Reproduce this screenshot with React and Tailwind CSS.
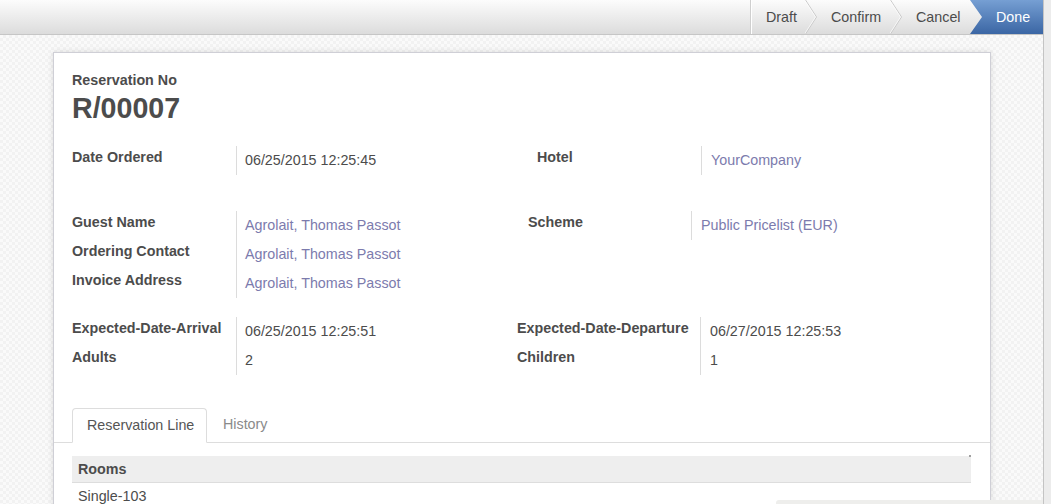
/**
 * Reservation form: status bar on top, sheet with fields, notebook tabs and rooms table.
 */

const linkCls = 'text-[#7c7bad]';

function Chevron() {
  return (
    <svg width="12" height="34" viewBox="0 0 12 34" className="shrink-0">
      <polyline points="0.5,0 11.5,17 0.5,34" fill="none" stroke="#c9c9c9" strokeWidth="1" />
      <polyline points="-0.5,0 10.5,17 -0.5,34" fill="none" stroke="#ffffff" strokeWidth="1" opacity="0.7" />
    </svg>
  );
}

function StatusBar() {
  return (
    <div className="flex h-[34px] text-[14.3px] leading-[16px] text-[#4c4c4c]">
      <div className="w-[55px] pl-[15px] flex items-center border-l border-[#cfcfcf] shadow-[inset_1px_0_0_#ffffff]">
        Draft
      </div>
      <Chevron />
      <div className="w-[73px] pl-[14px] flex items-center">Confirm</div>
      <Chevron />
      <div className="w-[68px] pl-[14px] flex items-center">Cancel</div>
      <div className="w-[73px] pl-[26px] flex items-center text-white bg-gradient-to-b from-[#769fd3] to-[#3b66a4] [clip-path:polygon(0_0,100%_0,100%_100%,0_100%,12px_50%)]">
        Done
      </div>
    </div>
  );
}

function Label({ children }) {
  return <div className="h-[29px] pt-[3px] font-bold whitespace-nowrap">{children}</div>;
}

function Value({ children, link }) {
  return (
    <div className={`h-[29px] pt-[6px] whitespace-nowrap ${link ? linkCls : ''}`}>{children}</div>
  );
}

export default function App() {
  return (
    <div className="relative flex w-[1051px] h-[504px] overflow-hidden font-['Liberation_Sans',Arial,sans-serif] text-[14.3px] leading-[16px] text-[#4c4c4c]">
      <div className="w-[1043px] flex flex-col">
        {/* Top bar */}
        <div className="h-[35px] shrink-0 flex justify-end border-b border-[#c6c6c6] bg-gradient-to-b from-[#fcfcfc] to-[#dcdcdc]">
          <StatusBar />
        </div>

        {/* Sheet background */}
        <div className="flex-1 pt-[17px] pl-[53px] bg-[repeating-conic-gradient(#f2f2f2_0%_25%,#fafafa_0%_50%)] bg-[length:6px_6px]">
          <div className="w-[938px] h-[600px] bg-white border border-[#cfcfd6] shadow-[0_0_6px_rgba(0,0,0,0.12)]">
            <div className="pl-[18px] pr-[19px] pt-[19px]">
              <div className="font-bold">Reservation No</div>
              <div className="mt-[4px] text-[28.6px] leading-[32px] font-bold">R/00007</div>

              {/* Date ordered / Hotel */}
              <div className="flex mt-[22px]">
                <div className="w-[164px]">
                  <Label>Date Ordered</Label>
                </div>
                <div className="w-[301px] self-start border-l border-[#dcdcdc] pl-2">
                  <Value>06/25/2015 12:25:45</Value>
                </div>
                <div className="w-[164px]">
                  <Label>Hotel</Label>
                </div>
                <div className="self-start border-l border-[#dcdcdc] pl-[9px]">
                  <Value link>YourCompany</Value>
                </div>
              </div>

              {/* Guest / Scheme */}
              <div className="flex mt-[36px]">
                <div className="w-[164px]">
                  <Label>Guest Name</Label>
                  <Label>Ordering Contact</Label>
                  <Label>Invoice Address</Label>
                </div>
                <div className="w-[292px] self-start border-l border-[#dcdcdc] pl-2">
                  <Value link>Agrolait, Thomas Passot</Value>
                  <Value link>Agrolait, Thomas Passot</Value>
                  <Value link>Agrolait, Thomas Passot</Value>
                </div>
                <div className="w-[163px]">
                  <Label>Scheme</Label>
                </div>
                <div className="self-start border-l border-[#dcdcdc] pl-[9px]">
                  <Value link>Public Pricelist (EUR)</Value>
                </div>
              </div>

              {/* Dates / guests */}
              <div className="flex mt-[19px]">
                <div className="w-[164px]">
                  <Label>Expected-Date-Arrival</Label>
                  <Label>Adults</Label>
                </div>
                <div className="w-[281px] self-start border-l border-[#dcdcdc] pl-2">
                  <Value>06/25/2015 12:25:51</Value>
                  <Value>2</Value>
                </div>
                <div className="w-[183px]">
                  <Label>Expected-Date-Departure</Label>
                  <Label>Children</Label>
                </div>
                <div className="self-start border-l border-[#dcdcdc] pl-[9px]">
                  <Value>06/27/2015 12:25:53</Value>
                  <Value>1</Value>
                </div>
              </div>
            </div>

            {/* Notebook */}
            <div className="mt-[33px] flex items-end pl-[18px] border-b border-[#dddddd]">
              <div className="w-[135px] h-[35px] -mb-px pl-[14px] pt-[8px] bg-white border border-[#dddddd] border-b-transparent rounded-t-[4px] text-[#555555]">
                Reservation Line
              </div>
              <div className="h-[34px] pl-[16px] pt-[8px] text-[#8a8a8a]">History</div>
            </div>

            <div className="pl-[18px] pr-[19px] pt-[13px]">
              <div className="relative h-[27px] pl-[6px] pt-[5px] bg-[#eeeeee] border-b border-[#dddddd] font-bold">
                Rooms
                <span className="absolute right-0 -top-px w-[2px] h-[2px] bg-[#a0a0a0]" />
              </div>
              <div className="h-[27px] pl-[6px] pt-[5px]">Single-103</div>
            </div>
          </div>
        </div>
      </div>

      {/* Window scrollbar */}
      <div className="w-[8px] border-l border-[#c4c4c4] bg-[#ececec]" />

      {/* Notification edge peeking in at the bottom */}
      <div className="absolute bottom-0 left-[776px] w-[267px] h-[4px] rounded-tl-[3px] bg-[#eeeeec]" />
    </div>
  );
}
